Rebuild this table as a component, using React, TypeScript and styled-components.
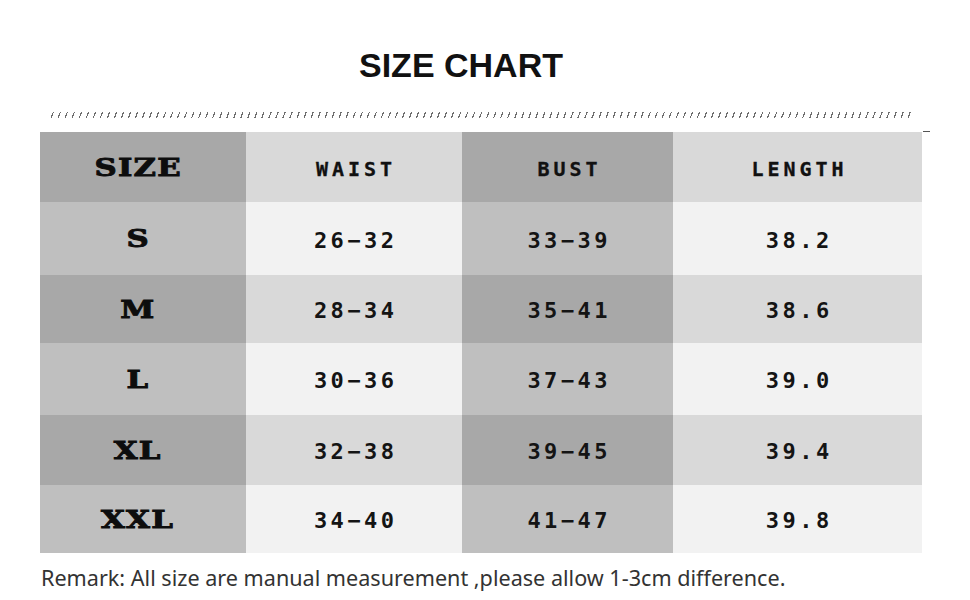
import * as React from 'react';
import styled, { createGlobalStyle } from 'styled-components';

const rows = [
  { size: 'S', waist: '26−32', bust: '33−39', length: '38.2' },
  { size: 'M', waist: '28−34', bust: '35−41', length: '38.6' },
  { size: 'L', waist: '30−36', bust: '37−43', length: '39.0' },
  { size: 'XL', waist: '32−38', bust: '39−45', length: '39.4' },
  { size: 'XXL', waist: '34−40', bust: '41−47', length: '39.8' },
];

const rowHeights = [70, 73, 68, 72, 70, 68];

function App() {
  return (
    <Page>
      <GlobalStyle />
      <Title>SIZE CHART</Title>
      <Divider />
      <Table>
        <Cell $tone="dark" $h={rowHeights[0]}>
          <SizeLabel>SIZE</SizeLabel>
        </Cell>
        <Cell $tone="light" $h={rowHeights[0]}>
          <HeadLabel>WAIST</HeadLabel>
        </Cell>
        <Cell $tone="dark" $h={rowHeights[0]}>
          <HeadLabel>BUST</HeadLabel>
        </Cell>
        <Cell $tone="light" $h={rowHeights[0]}>
          <HeadLabel>LENGTH</HeadLabel>
        </Cell>
        {rows.map((r, i) => {
          const odd = i % 2 === 0;
          const h = rowHeights[i + 1];
          return (
            <React.Fragment key={r.size}>
              <Cell $tone={odd ? 'mid' : 'dark'} $h={h}>
                <SizeLabel>{r.size}</SizeLabel>
              </Cell>
              <Cell $tone={odd ? 'pale' : 'light'} $h={h}>
                <Value>{r.waist}</Value>
              </Cell>
              <Cell $tone={odd ? 'mid' : 'dark'} $h={h}>
                <Value>{r.bust}</Value>
              </Cell>
              <Cell $tone={odd ? 'pale' : 'light'} $h={h}>
                <Value>{r.length}</Value>
              </Cell>
            </React.Fragment>
          );
        })}
      </Table>
      <Remark>Remark: All size are manual measurement ,please allow 1-3cm difference.</Remark>
    </Page>
  );
}

const GlobalStyle = createGlobalStyle`
  body {
    margin: 0;
    background: #fff;
    font-family: 'Liberation Sans', Arial, sans-serif;
  }
`;

const Page = styled.div`
  width: 970px;
  height: 600px;
  box-sizing: border-box;
  padding: 46px 48px 0 40px;
  overflow: hidden;
`;

const Title = styled.h1`
  margin: 0;
  padding-right: 40px;
  font-family: 'Liberation Sans', Arial, sans-serif;
  font-weight: 700;
  font-size: 34px;
  line-height: 38px;
  text-align: center;
  color: #111;
`;

const Divider = styled.div`
  margin: 28px 0 0 8px;
  width: 866px;
  height: 6px;
  background: repeating-linear-gradient(
    110deg,
    transparent 0 4.4px,
    #6e6e6e 4.4px 5.6px,
    transparent 5.6px 6.6px
  );
`;

const Table = styled.div`
  position: relative;
  margin-top: 14px;
  display: grid;
  grid-template-columns: 206px 216px 211px 249px;
  width: 882px;

  &::after {
    content: '';
    position: absolute;
    top: -1px;
    right: -8px;
    width: 7px;
    height: 1px;
    background: #555;
  }
`;

const tones = {
  dark: '#a8a8a8',
  mid: '#bfbfbf',
  light: '#d9d9d9',
  pale: '#f2f2f2',
};

const Cell = styled.div<{ $tone: keyof typeof tones; $h: number }>`
  height: ${(p) => p.$h}px;
  background: ${(p) => tones[p.$tone]};
  display: flex;
  align-items: center;
  justify-content: center;
`;

const SizeLabel = styled.span`
  display: inline-block;
  margin-right: 10px;
  font-family: 'DejaVu Serif', 'Liberation Serif', serif;
  font-weight: 700;
  font-size: 24px;
  letter-spacing: 1px;
  color: #0d0d0d;
  transform: scaleX(1.28);
  -webkit-text-stroke: 0.9px #0d0d0d;
`;

const HeadLabel = styled.span`
  margin-top: 4px;
  font-family: 'DejaVu Sans Mono', 'Liberation Mono', monospace;
  font-weight: 700;
  font-size: 20px;
  letter-spacing: 4px;
  margin-right: -4px;
  color: #111;
  -webkit-text-stroke: 0.3px #111;
`;

const Value = styled.span`
  margin-top: 3px;
  font-family: 'DejaVu Sans Mono', 'Liberation Mono', monospace;
  font-weight: 700;
  font-size: 22px;
  letter-spacing: 3.5px;
  margin-right: -3.5px;
  color: #141414;
`;

const Remark = styled.p`
  margin: 11px 0 0 1px;
  font-family: 'Noto Sans', 'Open Sans', sans-serif;
  font-size: 21.6px;
  line-height: 28px;
  color: #333;
  white-space: nowrap;
`;

export default App;
